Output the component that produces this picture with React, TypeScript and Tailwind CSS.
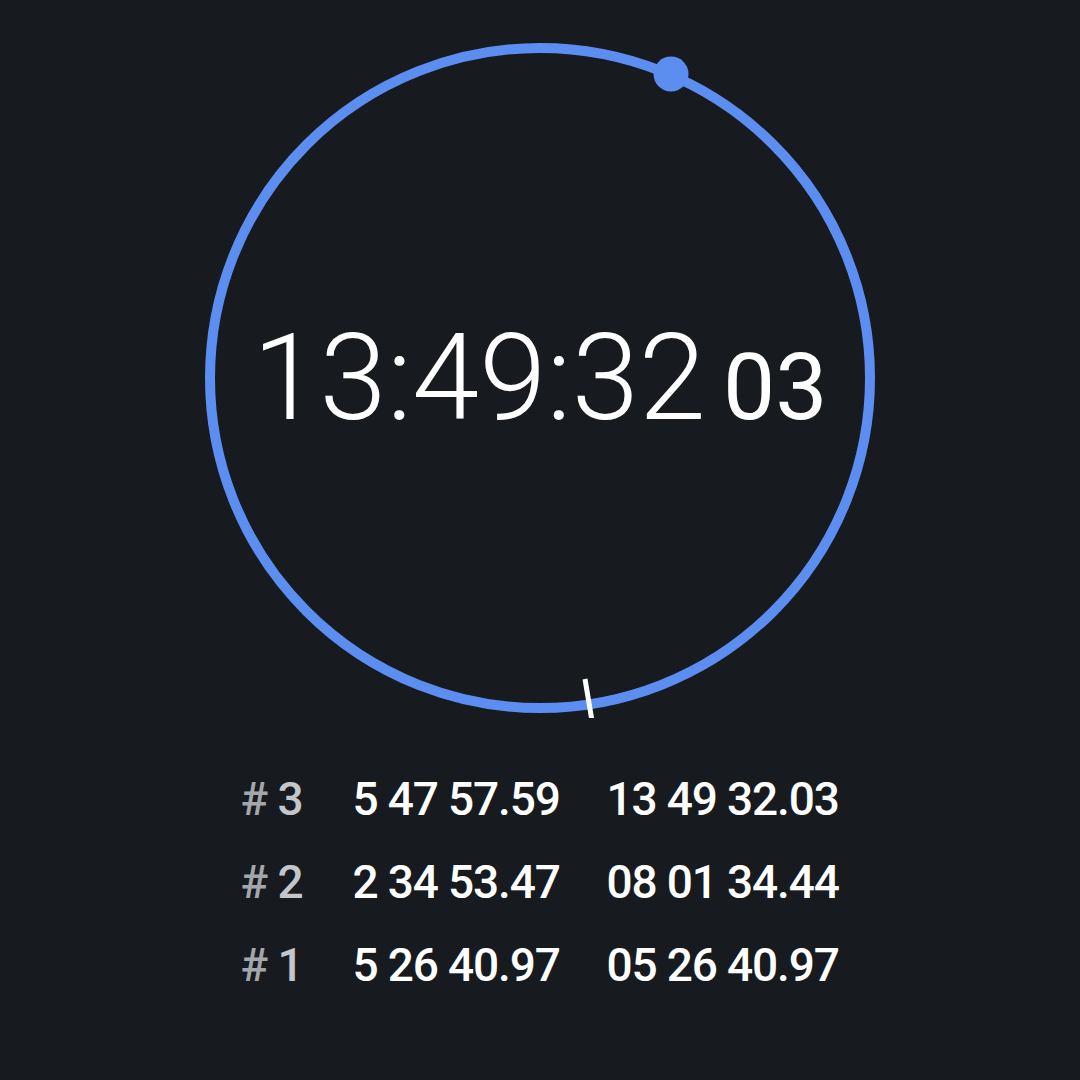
import React from "react";

const BLUE = "#5b8ef0";

type Lap = { n: number; lap: string; total: string };

const LAPS: Lap[] = [
  { n: 3, lap: "5 47 57.59", total: "13 49 32.03" },
  { n: 2, lap: "2 34 53.47", total: "08 01 34.44" },
  { n: 1, lap: "5 26 40.97", total: "05 26 40.97" },
];

const Dial: React.FC = () => {
  // circle centre (340,340), radius 330
  const dot = { x: 340 + 131, y: 340 - 304 };
  const tick = { x1: 340 + 45, y1: 340 + 301, x2: 340 + 53, y2: 340 + 349 };

  return (
    <div className="relative w-[680px] h-[680px]">
      <svg width="680" height="680" viewBox="0 0 680 680" className="absolute inset-0">
        <circle cx="340" cy="340" r="330" fill="none" stroke={BLUE} strokeWidth="10" />
        <circle cx={dot.x} cy={dot.y} r="17.5" fill={BLUE} />
        <line
          x1={tick.x1}
          y1={tick.y1}
          x2={tick.x2}
          y2={tick.y2}
          stroke="#ffffff"
          strokeWidth="5"
        />
      </svg>
      <div className="absolute inset-0 flex items-center justify-center">
        <div className="flex items-baseline text-white leading-none">
          <span className="text-[121px] font-light">13:49:32</span>
          <span className="ml-[17px] text-[93px] font-normal">03</span>
        </div>
      </div>
    </div>
  );
};

export default function App() {
  return (
    <div
      className="w-full min-h-screen bg-[#171b1f] flex flex-col items-center pt-[38px]"
      style={{ fontFamily: "Roboto, 'Liberation Sans', sans-serif" }}
    >
      <Dial />
      <div className="mt-[40px] grid grid-cols-[112px_254px_233px] text-[46px] font-medium tracking-[-0.025em]">
        {LAPS.map((l) => (
          <React.Fragment key={l.n}>
            <div className="h-[83px] leading-[83px]">
              <span className="text-[#a3a7ab]">#</span>
              <span className="text-[#c3c6ca]"> {l.n}</span>
            </div>
            <div className="h-[83px] leading-[83px] text-white">{l.lap}</div>
            <div className="h-[83px] leading-[83px] text-white">{l.total}</div>
          </React.Fragment>
        ))}
      </div>
    </div>
  );
}
